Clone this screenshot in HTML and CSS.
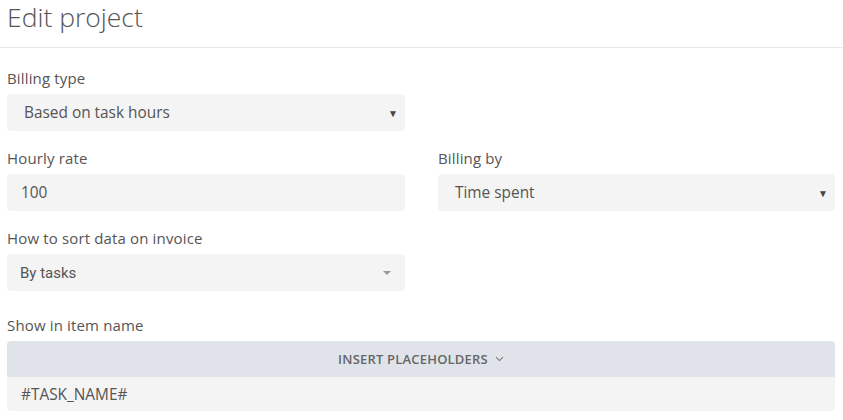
FILE: index.html
```html
<!DOCTYPE html>
<html>
<head>
<meta charset="utf-8">
<link rel="stylesheet" href="styles.css">
</head>
<body>
<div class="header"><h1 class="title">Edit project</h1></div>
<div class="form">
  <div class="row">
    <div class="field">
      <div class="label">Billing type</div>
      <div class="select"><span class="value">Based on task hours</span><span class="caret">&#9660;</span></div>
    </div>
    <div class="field"></div>
  </div>
  <div class="row">
    <div class="field">
      <div class="label">Hourly rate</div>
      <div class="input"><span class="value">100</span></div>
    </div>
    <div class="field">
      <div class="label">Billing by</div>
      <div class="select"><span class="value">Time spent</span><span class="caret">&#9660;</span></div>
    </div>
  </div>
  <div class="row">
    <div class="field">
      <div class="label">How to sort data on invoice</div>
      <div class="select s2"><span class="value">By tasks</span><span class="tri"></span></div>
    </div>
    <div class="field"></div>
  </div>
  <div class="full">
    <div class="label">Show in item name</div>
    <div class="bar">INSERT PLACEHOLDERS <svg class="chev" width="9" height="6" viewBox="0 0 9 6"><path d="M1 1.2 L4.5 4.6 L8 1.2" fill="none" stroke="#777" stroke-width="1.1"/></svg></div>
    <div class="area"><span class="value">#TASK_NAME#</span></div>
  </div>
</div>
</body>
</html>
```
FILE: styles.css
```css
* { box-sizing: border-box; }
body {
  margin: 0;
  background: #fff;
  font-family: "Open Sans", "Liberation Sans", sans-serif;
  color: #555;
}
.header {
  height: 48px;
  border-bottom: 1px solid #e8e8e8;
  padding: 0 7px;
}
.title {
  margin: 0;
  font-weight: 300;
  font-size: 26.5px;
  line-height: 34px;
  color: #555;
}
.form {
  padding: 20px 8px 0 7px;
}
.row {
  display: grid;
  grid-template-columns: 398px 397px;
  column-gap: 33px;
  margin-bottom: 17px;
}
.label {
  font-size: 15px;
  letter-spacing: 0.15px;
  line-height: 20px;
  margin-bottom: 6px;
  color: #555;
}
.select, .input {
  height: 37px;
  background: #f4f4f4;
  border-radius: 4px;
  display: flex;
  align-items: center;
  justify-content: space-between;
  padding: 0 7px 0 17px;
  font-size: 15.4px;
  color: #555;
}
.input { padding-left: 14px; }
.caret {
  font-size: 10px;
  color: #444;
}
.s2 {
  padding-left: 13px;
  padding-right: 14px;
  font-family: Roboto, "Liberation Sans", sans-serif;
  font-size: 15px;
}
.tri {
  width: 0;
  height: 0;
  border-left: 4px solid transparent;
  border-right: 4px solid transparent;
  border-top: 4px solid #999;
}
.full {
  margin-top: 24px;
}
.full .label { margin-bottom: 6px; }
.bar {
  height: 36px;
  background: #e0e4ea;
  border-radius: 4px 4px 0 0;
  display: flex;
  align-items: center;
  justify-content: center;
  font-size: 13px;
  font-weight: 600;
  color: #666;
  letter-spacing: 0.2px;
}
.chev { margin-left: 7px; }
.area {
  height: 34px;
  background: #f4f4f4;
  border-radius: 0 0 4px 4px;
  display: flex;
  align-items: center;
  padding-left: 14px;
  font-size: 15.4px;
  color: #555;
}
```
